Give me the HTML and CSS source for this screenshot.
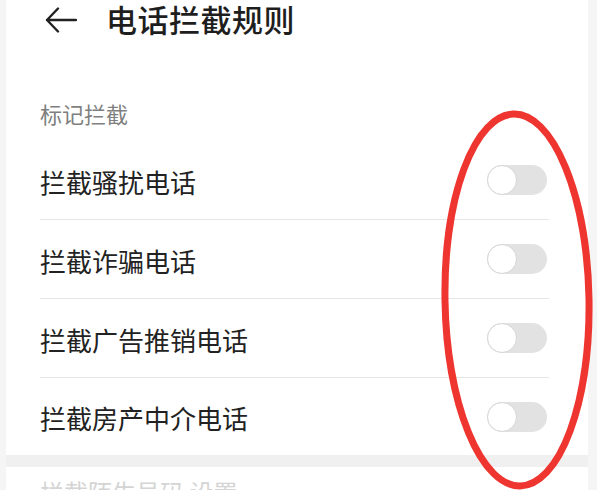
FILE: index.html
```html
<!DOCTYPE html>
<html lang="zh-CN">
<head>
<meta charset="utf-8">
<title>电话拦截规则</title>
<link rel="stylesheet" href="styles.css">
</head>
<body>
<div class="page">
  <header class="topbar">
    <svg class="back" width="32" height="26" viewBox="0 0 32 26" aria-hidden="true">
      <path d="M13 1.5 L2 13 L13 24.5 M2 13 H31" fill="none" stroke="#222" stroke-width="2.4" stroke-linecap="round" stroke-linejoin="round"/>
    </svg>
    <h1 class="title">电话拦截规则</h1>
  </header>
  <section class="card">
    <div class="section-title">标记拦截</div>
    <div class="row"><span class="label">拦截骚扰电话</span><span class="switch"><span class="knob"></span></span></div>
    <div class="row"><span class="label">拦截诈骗电话</span><span class="switch"><span class="knob"></span></span></div>
    <div class="row"><span class="label">拦截广告推销电话</span><span class="switch"><span class="knob"></span></span></div>
    <div class="row last"><span class="label">拦截房产中介电话</span><span class="switch"><span class="knob"></span></span></div>
  </section>
  <div class="gap"></div>
  <section class="card card-next">
    <div class="faded">拦截陌生号码 设置</div>
  </section>
</div>
<svg class="annot" width="597" height="490" viewBox="0 0 597 490" aria-hidden="true">
  <ellipse cx="517" cy="300" rx="72" ry="186" fill="none" stroke="#ee3530" stroke-width="7" transform="rotate(-1 517 300)"/>
</svg>
</body>
</html>
```
FILE: styles.css
```css
html, body {
  margin: 0;
  padding: 0;
  background: #f5f5f5;
  height: 490px;
  overflow: hidden;
}
body {
  font-family: "Noto Sans CJK SC", "Noto Sans", sans-serif;
  color: #222;
  position: relative;
}
.page {
  margin: 0 9px 0 6px;
  background: #f5f5f5;
}
.topbar {
  height: 40px;
  display: flex;
  align-items: center;
  background: #fff;
  padding-left: 39px;
}
.back {
  display: block;
  margin-top: -1px;
}
.title {
  margin: -2px 0 0 29px;
  font-size: 31px;
  font-weight: 500;
  line-height: 40px;
  color: #1e1e1e;
  letter-spacing: 0.5px;
}
.card {
  background: #fff;
}
.section-title {
  padding: 58px 0 13px 34px;
  line-height: 30px;
  font-size: 22px;
  color: #7f7f7f;
}
.row {
  height: 78px;
  margin: 0 39px 0 34px;
  display: flex;
  align-items: center;
  justify-content: space-between;
  border-bottom: 1px solid #e6e6e6;
}
.row.last {
  border-bottom: none;
  height: 77px;
}
.label {
  font-size: 26px;
  color: #222;
  margin-top: 2px;
}
.switch {
  width: 60px;
  height: 30px;
  border-radius: 15px;
  background: #e2e2e2;
  display: flex;
  align-items: center;
  margin-right: 2px;
}
.knob {
  width: 28px;
  height: 28px;
  border-radius: 50%;
  background: #fff;
  border: 1px solid #d6d6d6;
}
.gap {
  height: 12px;
  background: #f0f0f0;
}
.card-next {
  height: 40px;
  padding: 10px 0 0 34px;
}
.faded {
  font-size: 24px;
  color: #d4d4d4;
  line-height: 30px;
}
.annot {
  position: absolute;
  left: 0;
  top: 0;
  pointer-events: none;
}
```
